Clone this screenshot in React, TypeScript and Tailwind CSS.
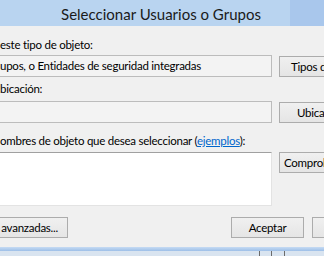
import React from "react";

const font = { fontFamily: 'Lato, "Noto Sans", sans-serif' };

function Btn({ children, className = "" }: { children: React.ReactNode; className?: string }) {
  return (
    <div
      className={
        "shrink-0 h-[21px] flex items-center border border-[#acacac] bg-gradient-to-b from-[#f0f0f0] to-[#e5e5e5] text-black whitespace-nowrap overflow-hidden " +
        className
      }
    >
      {children}
    </div>
  );
}

export default function App() {
  return (
    <div
      className="w-[324px] h-[256px] overflow-hidden bg-[#f0f0f0] flex flex-col text-[11.5px] tracking-[-0.25px] leading-[16px] text-black"
      style={font}
    >
      <div className="h-[26px] shrink-0 flex bg-[#b9d4f0]">
        <div className="flex-1 flex items-center justify-center pl-[32px] pt-[1px]">
          <span className="text-[15px] tracking-normal text-[#1a1a1a] whitespace-nowrap">Seleccionar Usuarios o Grupos</span>
        </div>
        <div className="w-[34px] bg-[#a9c7ec]" />
      </div>

      <div className="mt-[11px] whitespace-nowrap">este tipo de objeto:</div>
      <div className="mt-[2px] flex items-end gap-[7px]">
        <div className="flex-1 ml-[-4px] h-[22px] border border-[#bcbcbc] bg-[#f3f3f3] flex items-center pl-[3px] whitespace-nowrap overflow-hidden">
          upos, o Entidades de seguridad integradas
        </div>
        <Btn className="w-[102px] mr-[-57px] pl-[11px]">Tipos de objeto...</Btn>
      </div>

      <div className="mt-[4px] whitespace-nowrap">bicación:</div>
      <div className="mt-[4px] flex items-end gap-[7px]">
        <div className="flex-1 ml-[-4px] h-[22px] border border-[#bcbcbc] bg-[#f3f3f3]" />
        <Btn className="w-[102px] mr-[-57px] pl-[17px]">Ubicaciones...</Btn>
      </div>

      <div className="mt-[10px] whitespace-nowrap">
        ombres de objeto que desea seleccionar (
        <span className="text-[#0066cc] underline">ejemplos</span>):
      </div>
      <div className="mt-[3px] flex items-start gap-[7px]">
        <div className="flex-1 ml-[-4px] h-[54px] border border-[#e3e3e3] border-t-[#a0a0a0] border-l-[#a0a0a0] bg-white" />
        <Btn className="w-[102px] mr-[-57px] pl-[4px]">Comprobar nombres</Btn>
      </div>

      <div className="mt-[11px] flex items-center">
        <Btn className="w-[120px] ml-[-52px] justify-end pr-[9px]">Opciones avanzadas...</Btn>
        <div className="flex-1" />
        <Btn className="w-[73px] justify-center border-[#3399ff]">Aceptar</Btn>
        <Btn className="w-[73px] ml-[8px] mr-[-61px] justify-center">Cancelar</Btn>
      </div>

      <div className="mt-[9px] flex-1 flex flex-col">
        <div className="h-[4px] bg-gradient-to-b from-[#c6dbf3] to-[#9dbfe8]" />
        <div className="flex-1 bg-[#d9e4f0] relative">
          <div className="absolute left-[259px] top-0 bottom-0 w-[1px] bg-[#6b6b6b]" />
          <div className="absolute left-[271px] top-0 bottom-0 w-[1px] bg-[#6b6b6b]" />
          <div className="absolute left-[284px] top-0 bottom-0 w-[1px] bg-[#6b6b6b]" />
        </div>
      </div>
    </div>
  );
}
